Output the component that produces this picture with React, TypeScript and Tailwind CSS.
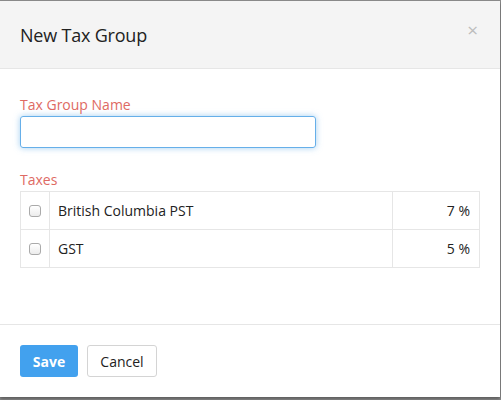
import React from "react";

export default function App() {
  const rows = [
    { name: "British Columbia PST", rate: "7 %" },
    { name: "GST", rate: "5 %" },
  ];
  return (
    <div className="w-[501px] h-[400px] bg-[#8c8c8c] overflow-hidden" style={{ fontFamily: '"Open Sans", "Liberation Sans", sans-serif' }}>
      <div className="w-[500px] h-[396px] mt-[1px] bg-white flex flex-col shadow-[0_2px_3px_rgba(0,0,0,0.35)]">
        <div className="h-[68px] bg-[#f4f4f4] border-b border-[#e6e6e6] flex items-center justify-between pl-[20px] pr-[22px] shrink-0">
          <h1 className="text-[18px] text-[#222] font-normal tracking-[-0.2px] pt-[1px]">New Tax Group</h1>
          <span className="text-[#bdbdbd] text-[19px] leading-none -mt-[8px]">×</span>
        </div>
        <div className="flex-1 px-[20px] pt-[26px]">
          <label className="block text-[14px] leading-[20px] text-[#de6a63]">Tax Group Name</label>
          <input
            type="text"
            className="mt-[1px] block w-[296px] h-[32px] rounded-[3px] border border-[#66afe9] shadow-[0_0_6px_rgba(102,175,233,0.6)] outline-none px-2 text-[14px]"
          />
          <label className="block mt-[22px] text-[14px] leading-[20px] text-[#de6a63]">Taxes</label>
          <div className="mt-[1px] w-[460px] border border-[#e6e6e6]">
            {rows.map((r, i) => (
              <div key={r.name} className={`flex text-[14px] text-[#222] ${i > 0 ? "h-[38px] border-t border-[#e6e6e6]" : "h-[37px]"}`}>
                <div className="w-[29px] border-r border-[#e6e6e6] flex items-center justify-center">
                  <span className="w-[12px] h-[12px] rounded-[3px] border border-[#aaa] bg-gradient-to-b from-white to-[#ececec] block mt-[1px]" />
                </div>
                <div className="flex-1 flex items-center pl-[8px]">{r.name}</div>
                <div className="w-[87px] border-l border-[#e6e6e6] flex items-center justify-end pr-[9px]">{r.rate}</div>
              </div>
            ))}
          </div>
        </div>
        <div className="h-[73px] border-t border-[#e6e6e6] flex items-start gap-[9px] px-[20px] pt-[20px] shrink-0">
          <button className="h-[32px] w-[58px] rounded-[3px] bg-[#42a1ee] text-white text-[14px] font-bold">Save</button>
          <button className="h-[32px] w-[70px] rounded-[3px] border border-[#d4d4d4] bg-white text-[#222] text-[14px]">Cancel</button>
        </div>
      </div>
    </div>
  );
}
